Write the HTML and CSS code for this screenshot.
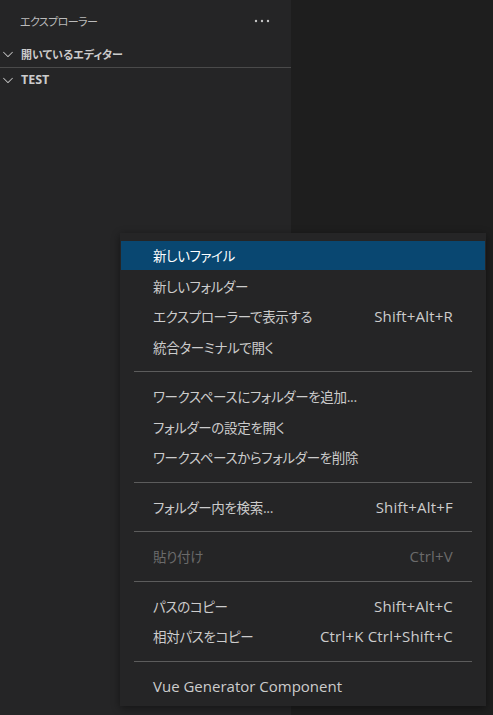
FILE: index.html
```html
<!DOCTYPE html>
<html lang="ja">
<head>
<meta charset="utf-8">
<link rel="stylesheet" href="styles.css">
</head>
<body>
<div class="window">
  <aside class="sidebar">
    <div class="title">
      <span class="title-text">エクスプローラー</span>
      <svg class="more" width="16" height="16" viewBox="0 0 16 16"><circle cx="2" cy="8" r="1.2"/><circle cx="8" cy="8" r="1.2"/><circle cx="14" cy="8" r="1.2"/></svg>
    </div>
    <div class="pane-header first">
      <svg class="chev" width="16" height="16" viewBox="0 0 16 16"><path d="M7.976 10.072l4.357-4.357.62.618L8.284 11h-.618L3 6.333l.619-.618 4.357 4.357z"/></svg>
      <span>開いているエディター</span>
    </div>
    <div class="pane-header second">
      <svg class="chev" width="16" height="16" viewBox="0 0 16 16"><path d="M7.976 10.072l4.357-4.357.62.618L8.284 11h-.618L3 6.333l.619-.618 4.357 4.357z"/></svg>
      <span class="latin">TEST</span>
    </div>
  </aside>
  <main class="editor"></main>
</div>

<div class="menu">
  <div class="item active"><span class="label">新しいファイル</span></div>
  <div class="item"><span class="label">新しいフォルダー</span></div>
  <div class="item"><span class="label">エクスプローラーで表示する</span><span class="key">Shift+Alt+R</span></div>
  <div class="item"><span class="label">統合ターミナルで開く</span></div>
  <div class="sep"></div>
  <div class="item"><span class="label">ワークスペースにフォルダーを追加...</span></div>
  <div class="item"><span class="label">フォルダーの設定を開く</span></div>
  <div class="item"><span class="label">ワークスペースからフォルダーを削除</span></div>
  <div class="sep"></div>
  <div class="item"><span class="label">フォルダー内を検索...</span><span class="key">Shift+Alt+F</span></div>
  <div class="sep"></div>
  <div class="item disabled"><span class="label">貼り付け</span><span class="key">Ctrl+V</span></div>
  <div class="sep"></div>
  <div class="item"><span class="label">パスのコピー</span><span class="key">Shift+Alt+C</span></div>
  <div class="item"><span class="label">相対パスをコピー</span><span class="key">Ctrl+K Ctrl+Shift+C</span></div>
  <div class="sep"></div>
  <div class="item"><span class="label latin">Vue Generator Component</span></div>
</div>
</body>
</html>
```

FILE: styles.css
```css
html, body {
  margin: 0;
  padding: 0;
}
body {
  width: 493px;
  height: 715px;
  overflow: hidden;
  background: #1e1e1e;
  font-family: "Open Sans", "Noto Sans CJK JP", sans-serif;
  font-feature-settings: "palt";
  color: #cccccc;
  position: relative;
}
.window {
  display: flex;
  height: 715px;
}
.sidebar {
  width: 291px;
  background: #252526;
  display: flex;
  flex-direction: column;
}
.editor {
  flex: 1;
  background: #1e1e1e;
}
.title {
  height: 41px;
  display: flex;
  align-items: center;
  padding: 0 21px 0 20px;
  justify-content: space-between;
  font-size: 11px;
  color: #bbbbbb;
}
.title-text {
  font-family: "Noto Sans CJK JP", sans-serif;
  letter-spacing: -0.6px;
}
.more {
  fill: #c5c5c5;
}
.pane-header {
  display: flex;
  align-items: center;
  gap: 5px;
  font-size: 11px;
  font-weight: bold;
  color: #cccccc;
  padding-left: 0;
  font-family: "Noto Sans CJK JP", sans-serif;
}
.pane-header.first {
  height: 26px;
}
.pane-header.second {
  height: 23px;
  border-top: 1px solid #4a4a4a;
}
.pane-header .latin {
  font-family: "Open Sans", sans-serif;
  font-weight: 700;
  font-size: 12.5px;
}
.chev {
  fill: #c5c5c5;
  flex: none;
}

.menu {
  position: absolute;
  left: 120px;
  top: 233px;
  width: 366px;
  padding: 7px 0 5px;
  background: #252526;
  box-shadow: 0 2px 8px rgba(0, 0, 0, 0.45);
  font-size: 13.5px;
  box-sizing: border-box;
}
.item {
  height: 28.5px;
  border: 1px solid transparent;
  display: flex;
  align-items: center;
  justify-content: space-between;
  padding: 0 32px;
  font-family: "Noto Sans CJK JP", sans-serif;
}
.item .label {
  letter-spacing: -0.35px;
}
.item .label.latin {
  font-family: "Open Sans", sans-serif;
  font-size: 15px;
  letter-spacing: 0;
}
.item.active {
  background: #094771;
  background-clip: padding-box;
  color: #ffffff;
}
.item.disabled {
  color: #6b6b6b;
}
.key {
  font-family: "Open Sans", sans-serif;
  font-size: 15px;
  letter-spacing: 0.2px;
}
.sep {
  height: 19px;
  display: flex;
  align-items: center;
  padding: 0 14px;
}
.sep::before {
  content: "";
  flex: 1;
  height: 1px;
  background: #5c5c5c;
}
```
